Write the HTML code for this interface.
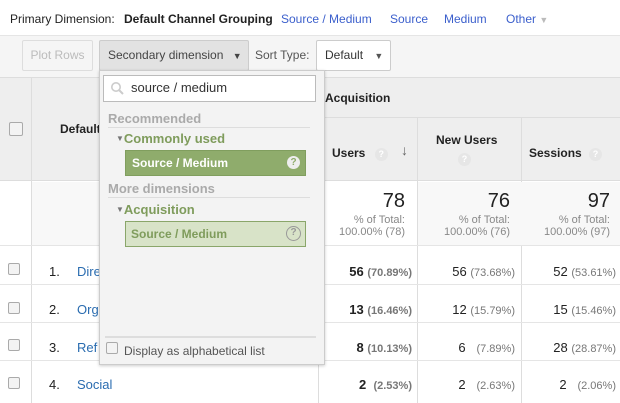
<!DOCTYPE html><html><head><style>
*{margin:0;padding:0;box-sizing:border-box}
body{width:620px;height:403px;overflow:hidden;position:relative;font-family:"Liberation Sans",Arial,sans-serif;font-size:12px;color:#222;background:#fff}
.a{position:absolute}
.lnk{color:#3b5fcc}
.q{display:inline-block;width:13px;height:13px;border-radius:50%;background:#e6e6e6;color:#fff;font-size:9px;text-align:center;line-height:13px;font-weight:bold}
.cb{position:absolute;width:12px;height:12px;border:1px solid #aaa;border-radius:2px;background:#f3f3f3}
.r{text-align:right}
.g{color:#777}
.tot{font-size:11px;color:#888;line-height:12px;text-align:right}
</style></head><body>
<div class="a" style="left:10px;top:12px;font-size:12px">Primary Dimension:</div>
<div class="a" style="left:124px;top:12px;font-weight:bold">Default Channel Grouping</div>
<div class="a lnk" style="left:281px;top:12px">Source / Medium</div>
<div class="a lnk" style="left:390px;top:12px">Source</div>
<div class="a lnk" style="left:444px;top:12px">Medium</div>
<div class="a lnk" style="left:506px;top:12px">Other <span style="color:#bbb;font-size:9px">▼</span></div>
<!-- toolbar -->
<div class="a" style="left:0;top:35px;width:620px;height:42px;background:#f5f5f5;border-top:1px solid #e5e5e5"></div>
<div class="a" style="left:22px;top:40px;width:71px;height:31px;border:1px solid #ddd;border-radius:2px;color:#bbb;text-align:center;line-height:29px">Plot Rows</div>
<div class="a" style="left:99px;top:40px;width:150px;height:31px;border:1px solid #ccc;border-radius:2px;background:#e2e2e2;line-height:29px;padding-left:8px;color:#444">Secondary dimension <span style="font-size:9px;margin-left:6px">▼</span></div>
<div class="a" style="left:255px;top:48px;color:#555">Sort Type:</div>
<div class="a" style="left:316px;top:40px;width:75px;height:31px;border:1px solid #ccc;border-radius:2px;background:#fff;line-height:29px;padding-left:8px;color:#333">Default <span style="font-size:9px;margin-left:8px;color:#555">▼</span></div>
<!-- table header -->
<div class="a" style="left:0;top:77px;width:620px;height:104px;background:#eee;border-top:1px solid #ddd;border-bottom:1px solid #ddd"></div>
<div class="a" style="left:318px;top:117px;width:302px;height:1px;background:#ddd"></div>
<div class="a" style="left:31px;top:77px;width:1px;height:326px;background:#ddd"></div>
<div class="a" style="left:318px;top:77px;width:1px;height:326px;background:#ddd"></div>
<div class="a" style="left:417px;top:117px;width:1px;height:286px;background:#ddd"></div>
<div class="a" style="left:521px;top:117px;width:1px;height:286px;background:#ddd"></div>
<div class="cb" style="left:9px;top:122px;width:14px;height:14px"></div>
<div class="a" style="left:60px;top:122px;font-weight:bold">Default</div>
<div class="a" style="left:325px;top:91px;font-weight:bold">Acquisition</div>
<div class="a" style="left:332px;top:146px;font-weight:bold">Users <span class="q" style="margin-left:6px">?</span></div>
<div class="a" style="left:401px;top:142px;color:#666;font-size:14px;font-weight:bold">↓</div>
<div class="a" style="left:436px;top:133px;font-weight:bold">New Users</div>
<div class="a" style="left:458px;top:151px"><span class="q">?</span></div>
<div class="a" style="left:529px;top:146px;font-weight:bold">Sessions <span class="q" style="margin-left:4px">?</span></div>
<!-- totals -->
<div class="a" style="left:32px;top:182px;width:286px;height:63px;background:#f8f8f8"></div>
<div class="a" style="left:418px;top:182px;width:202px;height:63px;background:#f8f8f8"></div>
<div class="a r" style="left:320px;top:190px;width:85px;font-size:20px">78</div>
<div class="a tot" style="left:320px;top:214px;width:85px">% of Total:<br>100.00% (78)</div>
<div class="a r" style="left:420px;top:190px;width:90px;font-size:20px">76</div>
<div class="a tot" style="left:420px;top:214px;width:90px">% of Total:<br>100.00% (76)</div>
<div class="a r" style="left:522px;top:190px;width:88px;font-size:20px">97</div>
<div class="a tot" style="left:522px;top:214px;width:88px">% of Total:<br>100.00% (97)</div>
<!-- rows -->
<div class="a" style="left:0;top:245px;width:620px;height:1px;background:#e5e5e5"></div>
<div class="a" style="left:0;top:284px;width:620px;height:1px;background:#e5e5e5"></div>
<div class="a" style="left:0;top:322px;width:620px;height:1px;background:#e5e5e5"></div>
<div class="a" style="left:0;top:360px;width:620px;height:1px;background:#e5e5e5"></div>
<div class="cb" style="left:8px;top:263px"></div><div class="cb" style="left:8px;top:302px"></div><div class="cb" style="left:8px;top:339px"></div><div class="cb" style="left:8px;top:377px"></div>
<div class="a" style="left:49px;top:264px;font-size:13px">1.</div><div class="a lnk" style="left:77px;top:264px;font-size:13px;color:#2a6cb0">Dire</div>
<div class="a" style="left:49px;top:302px;font-size:13px">2.</div><div class="a lnk" style="left:77px;top:302px;font-size:13px;color:#2a6cb0">Org</div>
<div class="a" style="left:49px;top:340px;font-size:13px">3.</div><div class="a lnk" style="left:77px;top:340px;font-size:13px;color:#2a6cb0">Ref</div>
<div class="a" style="left:49px;top:377px;font-size:13px">4.</div><div class="a lnk" style="left:77px;top:377px;font-size:13px;color:#2a6cb0">Social</div>
<div class="a r" style="left:320px;top:264px;width:92px;font-size:13px"><b>56</b> <b class="g" style="font-size:11px">(70.89%)</b></div>
<div class="a r" style="left:320px;top:302px;width:92px;font-size:13px"><b>13</b> <b class="g" style="font-size:11px">(16.46%)</b></div>
<div class="a r" style="left:320px;top:340px;width:92px;font-size:13px"><b>8</b> <b class="g" style="font-size:11px">(10.13%)</b></div>
<div class="a r" style="left:320px;top:377px;width:92px;font-size:13px"><b>2</b> &nbsp;<b class="g" style="font-size:11px">(2.53%)</b></div>
<div class="a r" style="left:420px;top:264px;width:95px;font-size:13px">56 <span class="g" style="font-size:11px">(73.68%)</span></div>
<div class="a r" style="left:420px;top:302px;width:95px;font-size:13px">12 <span class="g" style="font-size:11px">(15.79%)</span></div>
<div class="a r" style="left:420px;top:340px;width:95px;font-size:13px">6 &nbsp;&nbsp;<span class="g" style="font-size:11px">(7.89%)</span></div>
<div class="a r" style="left:420px;top:377px;width:95px;font-size:13px">2 &nbsp;&nbsp;<span class="g" style="font-size:11px">(2.63%)</span></div>
<div class="a r" style="left:522px;top:264px;width:94px;font-size:13px">52 <span class="g" style="font-size:11px">(53.61%)</span></div>
<div class="a r" style="left:522px;top:302px;width:94px;font-size:13px">15 <span class="g" style="font-size:11px">(15.46%)</span></div>
<div class="a r" style="left:522px;top:340px;width:94px;font-size:13px">28 <span class="g" style="font-size:11px">(28.87%)</span></div>
<div class="a r" style="left:522px;top:377px;width:94px;font-size:13px">2 &nbsp;&nbsp;<span class="g" style="font-size:11px">(2.06%)</span></div>
<!-- dropdown -->
<div class="a" style="left:99px;top:70px;width:226px;height:295px;background:#f3f3f3;border:1px solid #ccc;box-shadow:0 1px 3px rgba(0,0,0,.2)"></div>
<div class="a" style="left:103px;top:75px;width:213px;height:27px;background:#fff;border:1px solid #bbb"></div>
<svg class="a" style="left:110px;top:81px" width="15" height="15"><circle cx="6" cy="6" r="4.2" fill="none" stroke="#ccc" stroke-width="1.6"/><line x1="9" y1="9" x2="13" y2="13" stroke="#ccc" stroke-width="2"/></svg>
<div class="a" style="left:131px;top:80px;font-size:13px;color:#333">source / medium</div>
<div class="a" style="left:108px;top:111px;font-size:13px;font-weight:bold;color:#aaa">Recommended</div>
<div class="a" style="left:108px;top:127px;width:202px;height:1px;background:#ddd"></div>
<div class="a" style="left:116px;top:131px;font-size:13px;font-weight:bold;color:#7f9c5c"><span style="font-size:8px;color:#777;vertical-align:2px">▼</span>Commonly used</div>
<div class="a" style="left:125px;top:150px;width:181px;height:26px;background:#8fac6c;border:1px solid #809e5e;color:#fff;font-weight:bold;line-height:24px;padding-left:6px">Source / Medium<span class="a" style="right:5px;top:5px;width:13px;height:13px;border-radius:50%;background:#eee;color:#8fac6c;font-size:10px;text-align:center;line-height:13px">?</span></div>
<div class="a" style="left:108px;top:181px;font-size:13px;font-weight:bold;color:#aaa">More dimensions</div>
<div class="a" style="left:108px;top:197px;width:202px;height:1px;background:#ddd"></div>
<div class="a" style="left:116px;top:202px;font-size:13px;font-weight:bold;color:#7f9c5c"><span style="font-size:8px;color:#777;vertical-align:2px">▼</span>Acquisition</div>
<div class="a" style="left:125px;top:221px;width:181px;height:26px;background:#d8e3c8;border:1px solid #8aa66a;color:#7f9c5c;font-weight:bold;line-height:24px;padding-left:5px">Source / Medium<span class="a" style="right:4px;top:4px;width:15px;height:15px;border-radius:50%;border:1.5px solid #999;color:#999;font-size:10px;text-align:center;line-height:12px">?</span></div>
<div class="a" style="left:105px;top:336px;width:211px;height:2px;background:#ddd"></div>
<div class="cb" style="left:106px;top:342px"></div>
<div class="a" style="left:124px;top:344px;color:#555">Display as alphabetical list</div>
</body></html>
